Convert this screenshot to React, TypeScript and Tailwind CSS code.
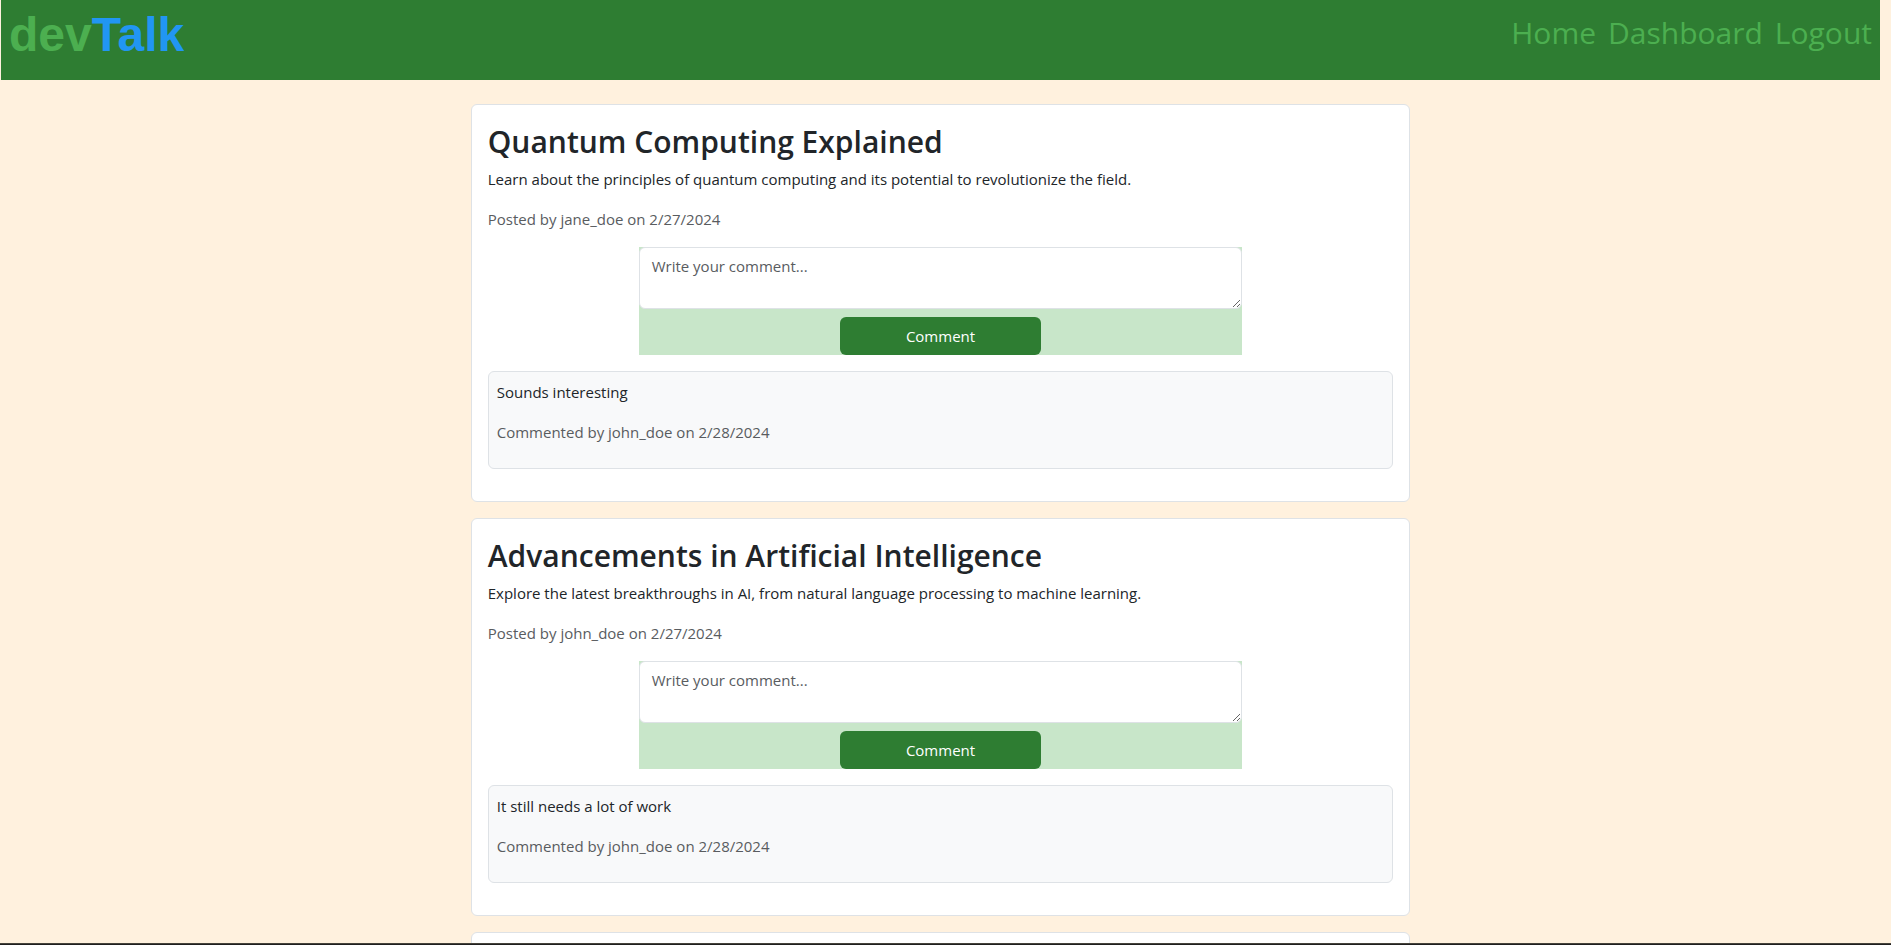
type Comment = { id: number; text: string; author: string; date: string };

type Post = {
  id: number;
  title: string;
  body: string;
  author: string;
  date: string;
  comments: Comment[];
};

const posts: Post[] = [
  {
    id: 1,
    title: "Quantum Computing Explained",
    body: "Learn about the principles of quantum computing and its potential to revolutionize the field.",
    author: "jane_doe",
    date: "2/27/2024",
    comments: [{ id: 1, text: "Sounds interesting", author: "john_doe", date: "2/28/2024" }],
  },
  {
    id: 2,
    title: "Advancements in Artificial Intelligence",
    body: "Explore the latest breakthroughs in AI, from natural language processing to machine learning.",
    author: "john_doe",
    date: "2/27/2024",
    comments: [{ id: 2, text: "It still needs a lot of work", author: "john_doe", date: "2/28/2024" }],
  },
];

const links = ["Home", "Dashboard", "Logout"];

function Header() {
  return (
    <header className="flex h-20 items-start justify-between bg-[#2e7d32] px-2 text-[#4caf50]">
      <h1 className="pt-1 font-['Liberation_Sans',Arial,sans-serif] text-5xl leading-[62px] font-bold">
        dev<span className="text-[#2196f3]">Talk</span>
      </h1>
      <nav className="flex gap-3 pt-2 text-[30px] leading-[50px]">
        {links.map((label) => (
          <a key={label} href="#">
            {label}
          </a>
        ))}
      </nav>
    </header>
  );
}

function CommentForm({ postId }: { postId: number }) {
  return (
    <form
      className="mx-auto mb-4 flex w-2/3 flex-col items-center gap-2 bg-[#c8e6c9]"
      onSubmit={(event) => event.preventDefault()}
    >
      <textarea
        id={`comment-${postId}`}
        aria-label="Write your comment"
        placeholder="Write your comment..."
        rows={2}
        className="block h-[62px] w-full resize-y rounded-md border border-[#dee2e6] bg-white px-3 py-1.5 placeholder:text-[#595c5f]"
      />
      <button type="submit" className="h-[38px] w-1/3 rounded-md bg-[#2e7d32] text-white">
        Comment
      </button>
    </form>
  );
}

function PostCard({ post }: { post: Post }) {
  return (
    <article className="mb-4 rounded-md border border-[#dee2e6] bg-white p-4">
      <h2 className="mb-1 text-[30px] leading-[42px] font-semibold">{post.title}</h2>
      <p className="mb-4">{post.body}</p>
      <p className="mb-4 text-[#595c5f]">
        Posted by {post.author} on {post.date}
      </p>
      <CommentForm postId={post.id} />
      {post.comments.map((comment) => (
        <div key={comment.id} className="mb-4 rounded-md border border-[#dee2e6] bg-[#f8f9fa] p-2">
          <p className="mb-4">{comment.text}</p>
          <p className="mb-4 text-[#595c5f]">
            Commented by {comment.author} on {comment.date}
          </p>
        </div>
      ))}
    </article>
  );
}

export default function App() {
  return (
    <div className="flex h-screen flex-col bg-[#fff1de] font-['Open_Sans','Noto_Sans',sans-serif] text-[15px] leading-6 text-[#212529]">
      <div className="min-h-0 flex-1 overflow-hidden pr-[11px] pl-px">
        <Header />
        <main className="mx-auto mt-6 w-1/2">
          {posts.map((post) => (
            <PostCard key={post.id} post={post} />
          ))}
          <div className="h-12 rounded-md border border-[#dee2e6] bg-white" />
        </main>
      </div>
      <div className="h-0.5 shrink-0 border-t border-[#46433b] bg-[#201f1f]" />
    </div>
  );
}
